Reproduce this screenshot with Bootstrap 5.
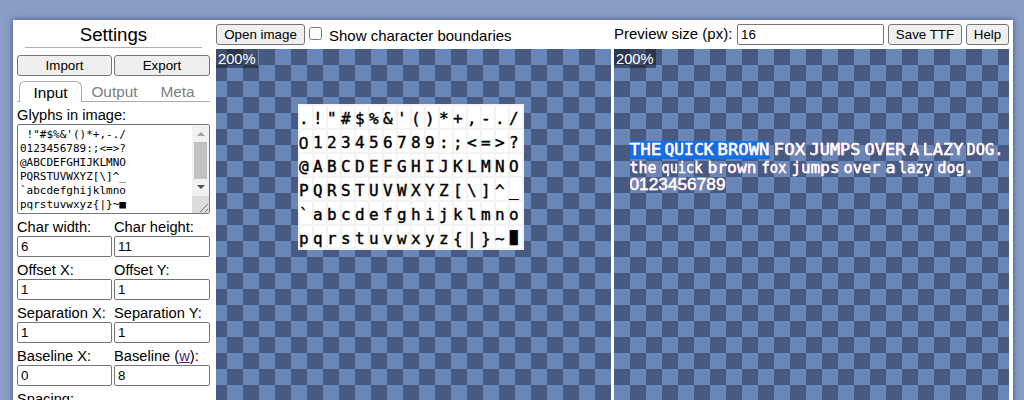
<!DOCTYPE html>
<html lang="en">
<head>
<meta charset="utf-8">
<title>Pixel font converter</title>
<link href="https://cdn.jsdelivr.net/npm/bootstrap@5.3.0/dist/css/bootstrap.min.css" rel="stylesheet">
<style>
html,body{height:400px;overflow:hidden}
body{background:#8a9dc6;font:14.67px/17px "Liberation Sans",Arial,sans-serif;color:#000;padding:20px 11px 0 13px}
.app-panel{height:460px;background:#fff;padding:4px;box-shadow:0 0 6px rgba(20,40,80,.65);gap:0}
.side{width:193px;margin-right:6px}
.side h1{font-size:18.67px;line-height:22px;font-weight:400;margin:0 8px 7px;height:24px;border-bottom:1px solid #b0b0b0;text-align:center}
.pbtn{font-size:13.33px;line-height:15px;height:21px;padding:2px 4px;white-space:nowrap;color:#000;background:#efefef;border:1px solid #767676;border-radius:3px;--bs-btn-hover-bg:#e5e5e5;--bs-btn-hover-color:#000}
.pair{display:grid;grid-template-columns:95px 96px;gap:0 2px}
.field{font-size:13.33px;line-height:15px;height:21px;padding:1px 3px;border:1px solid #767676;border-radius:2px;color:#000;background:#fff;width:100%;display:block}
.tabs{height:21px;margin-top:5px;border-bottom:1px solid #aaa;padding-left:2px;color:#808080;font-size:15.4px;display:flex}
.tabs div{text-align:center;line-height:22px}
.tabs .on{width:63px;height:21px;border:1px solid #aaa;border-bottom:0;border-radius:6px 6px 0 0;background:#fff;color:#000}
.glyph-area{height:90px;border:1px solid #767676;border-radius:2px;margin-bottom:5px;position:relative;display:flex;overflow:hidden}
.glyph-area pre{font:11px/14px "DejaVu Sans Mono",monospace;margin:0;padding:3px 2px 0;flex:1;overflow:hidden;color:#000}
.sbar{width:17px;height:88px;flex:none}
.stage{height:420px;position:relative;background:repeating-conic-gradient(#465a82 0 25%,#6886b7 0 50%) -5px 0/32px 32px}
.stage.alt{background-position:-16px 0}
.zoomtag{display:block;width:42px;height:19px;background:rgba(0,0,0,.4);color:#fff;line-height:20px;padding-left:2px}
.sheet{position:absolute;left:82px;top:55px;width:226px;height:146px;background:#f3f3f3;padding:2px;display:grid;grid-template-columns:repeat(16,12px);grid-auto-rows:22px;gap:2px}
.sheet span{background:#fff;font:16px/26px "DejaVu Sans Mono",monospace;-webkit-text-stroke:.4px #000;white-space:pre;text-indent:-1px;height:22px}
.sheet .zero{font-family:"Liberation Sans",sans-serif;font-size:16.5px}
.tool{height:25px}
.tool label{font-size:15px}
.tick{width:13px;height:13px;border:1px solid #767676;border-radius:2.5px;background:#fff;margin:3px 7px 0 4px}
.sample{position:absolute;left:0;top:80px}
.sample text{font:15.9px "DejaVu Sans Mono",monospace;fill:#fff;stroke:#fff;stroke-width:.5px}
.sample .digits{font-family:"Liberation Sans",sans-serif;font-size:16.5px}
.sample g{filter:drop-shadow(1px 0 0 rgba(205,125,185,.6))}
</style>
</head>
<body>
<main class="app-panel d-flex">
 <section class="side flex-shrink-0">
  <h1>Settings</h1>
  <div class="pair"><button class="btn pbtn">Import</button><button class="btn pbtn">Export</button></div>
  <div class="tabs"><div class="on">Input</div><div style="width:65px">Output</div><div style="width:61px">Meta</div></div>
  <div style="padding-top:5px">Glyphs in image:</div>
  <div class="glyph-area"><pre> !"#$%&amp;'()*+,-./
0123456789:;&lt;=&gt;?
@ABCDEFGHIJKLMNO
PQRSTUVWXYZ[\]^_
`abcdefghijklmno
pqrstuvwxyz{|}~■</pre>
   <svg class="sbar" viewBox="0 0 17 88"><path fill="#f1f1f1" d="M0 0h17v88H0z"/><path fill="#dcdcdc" d="M0 71h17v17H0z"/><path fill="#a3a3a3" d="M5 11l4-4 4 4z"/><path fill="#c1c1c1" d="M2 17h13v37H2z"/><path fill="#505050" d="M5 60h8l-4 4z"/><path stroke="#777" fill="none" d="M8 87l8-8M13 87l3-3"/></svg>
  </div>
  <div class="pair"><label>Char width:</label><label>Char height:</label><input class="field" value="6"><input class="field" value="11"></div>
  <div class="pair" style="margin-top:5px"><label>Offset X:</label><label>Offset Y:</label><input class="field" value="1"><input class="field" value="1"></div>
  <div class="pair text-nowrap" style="margin-top:5px"><label>Separation X:</label><label>Separation Y:</label><input class="field" value="1"><input class="field" value="1"></div>
  <div class="pair" style="margin-top:5px"><label>Baseline X:</label><label>Baseline (<a href="#" style="color:#551a8b">w</a>):</label><input class="field" value="0"><input class="field" value="8"></div>
  <div style="margin-top:5px">Spacing:</div>
 </section>
 <section class="flex-shrink-0" style="width:395px;margin-right:3px">
  <div class="tool d-flex align-items-start"><button class="btn pbtn" style="width:89px">Open image</button><span class="tick"></span><label style="padding-top:3px">Show character boundaries</label></div>
  <div class="stage"><span class="zoomtag">200%</span><div class="sheet" id="sheet"></div></div>
 </section>
 <section class="flex-shrink-0" style="width:395px">
  <div class="tool d-flex align-items-start"><label style="width:123px;padding-top:1px">Preview size (px):</label><input class="field" style="width:147px" value="16"><button class="btn pbtn ms-1" style="width:74px">Save TTF</button><button class="btn pbtn ms-1" style="width:43px">Help</button></div>
  <div class="stage alt"><span class="zoomtag">200%</span>
   <svg class="sample" width="395" height="80" viewBox="614 129 395 80">
    <path fill="#0f6fe8" d="M630 141h140v18H630z"/>
    <g id="sample"></g>
   </svg>
  </div>
 </section>
</main>
<script>
const rows=['.!"#$%&\'()*+,-./','0123456789:;<=>?','@ABCDEFGHIJKLMNO','PQRSTUVWXYZ[\\]^_','`abcdefghijklmno','pqrstuvwxyz{|}~■'];
const sheet=document.getElementById('sheet');
for(const c of rows.join('')){const s=document.createElement('span');s.textContent=c;
if(c==='0')s.className='zero';
if(c==='■'){s.textContent='█';s.style.cssText='font-size:12.5px;line-height:24px;text-indent:0'}
sheet.append(s)}
// word, left edge, right edge, baseline
const words=[['THE',630,661,155],['QUICK',665,713,155],['BROWN',718,769,155],['FOX',774,805,155],['JUMPS',810,860,155],['OVER',865,905,155],['A',910,919,155],['LAZY',923,963,155],['DOG.',967,1003,155],
['the',630,656,173],['quick',662,702,173],['brown',708,756,173],['fox',762,786,173],['jumps',792,839,173],['over',844,880,173],['a',886,895,173],['lazy',899,932,173],['dog.',938,973,173],['0123456789',630,725,190]];
const g=document.getElementById('sample');
for(const [w,a,b,y] of words){const t=document.createElementNS('http://www.w3.org/2000/svg','text');
if(w[0]==='0')t.setAttribute('class','digits');
t.setAttribute('x',a-.5);t.setAttribute('y',y);t.setAttribute('textLength',b-a+1);t.setAttribute('lengthAdjust','spacingAndGlyphs');t.textContent=w;g.append(t)}
</script>
<script src="https://cdn.jsdelivr.net/npm/bootstrap@5.3.0/dist/js/bootstrap.bundle.min.js"></script>
</body>
</html>
